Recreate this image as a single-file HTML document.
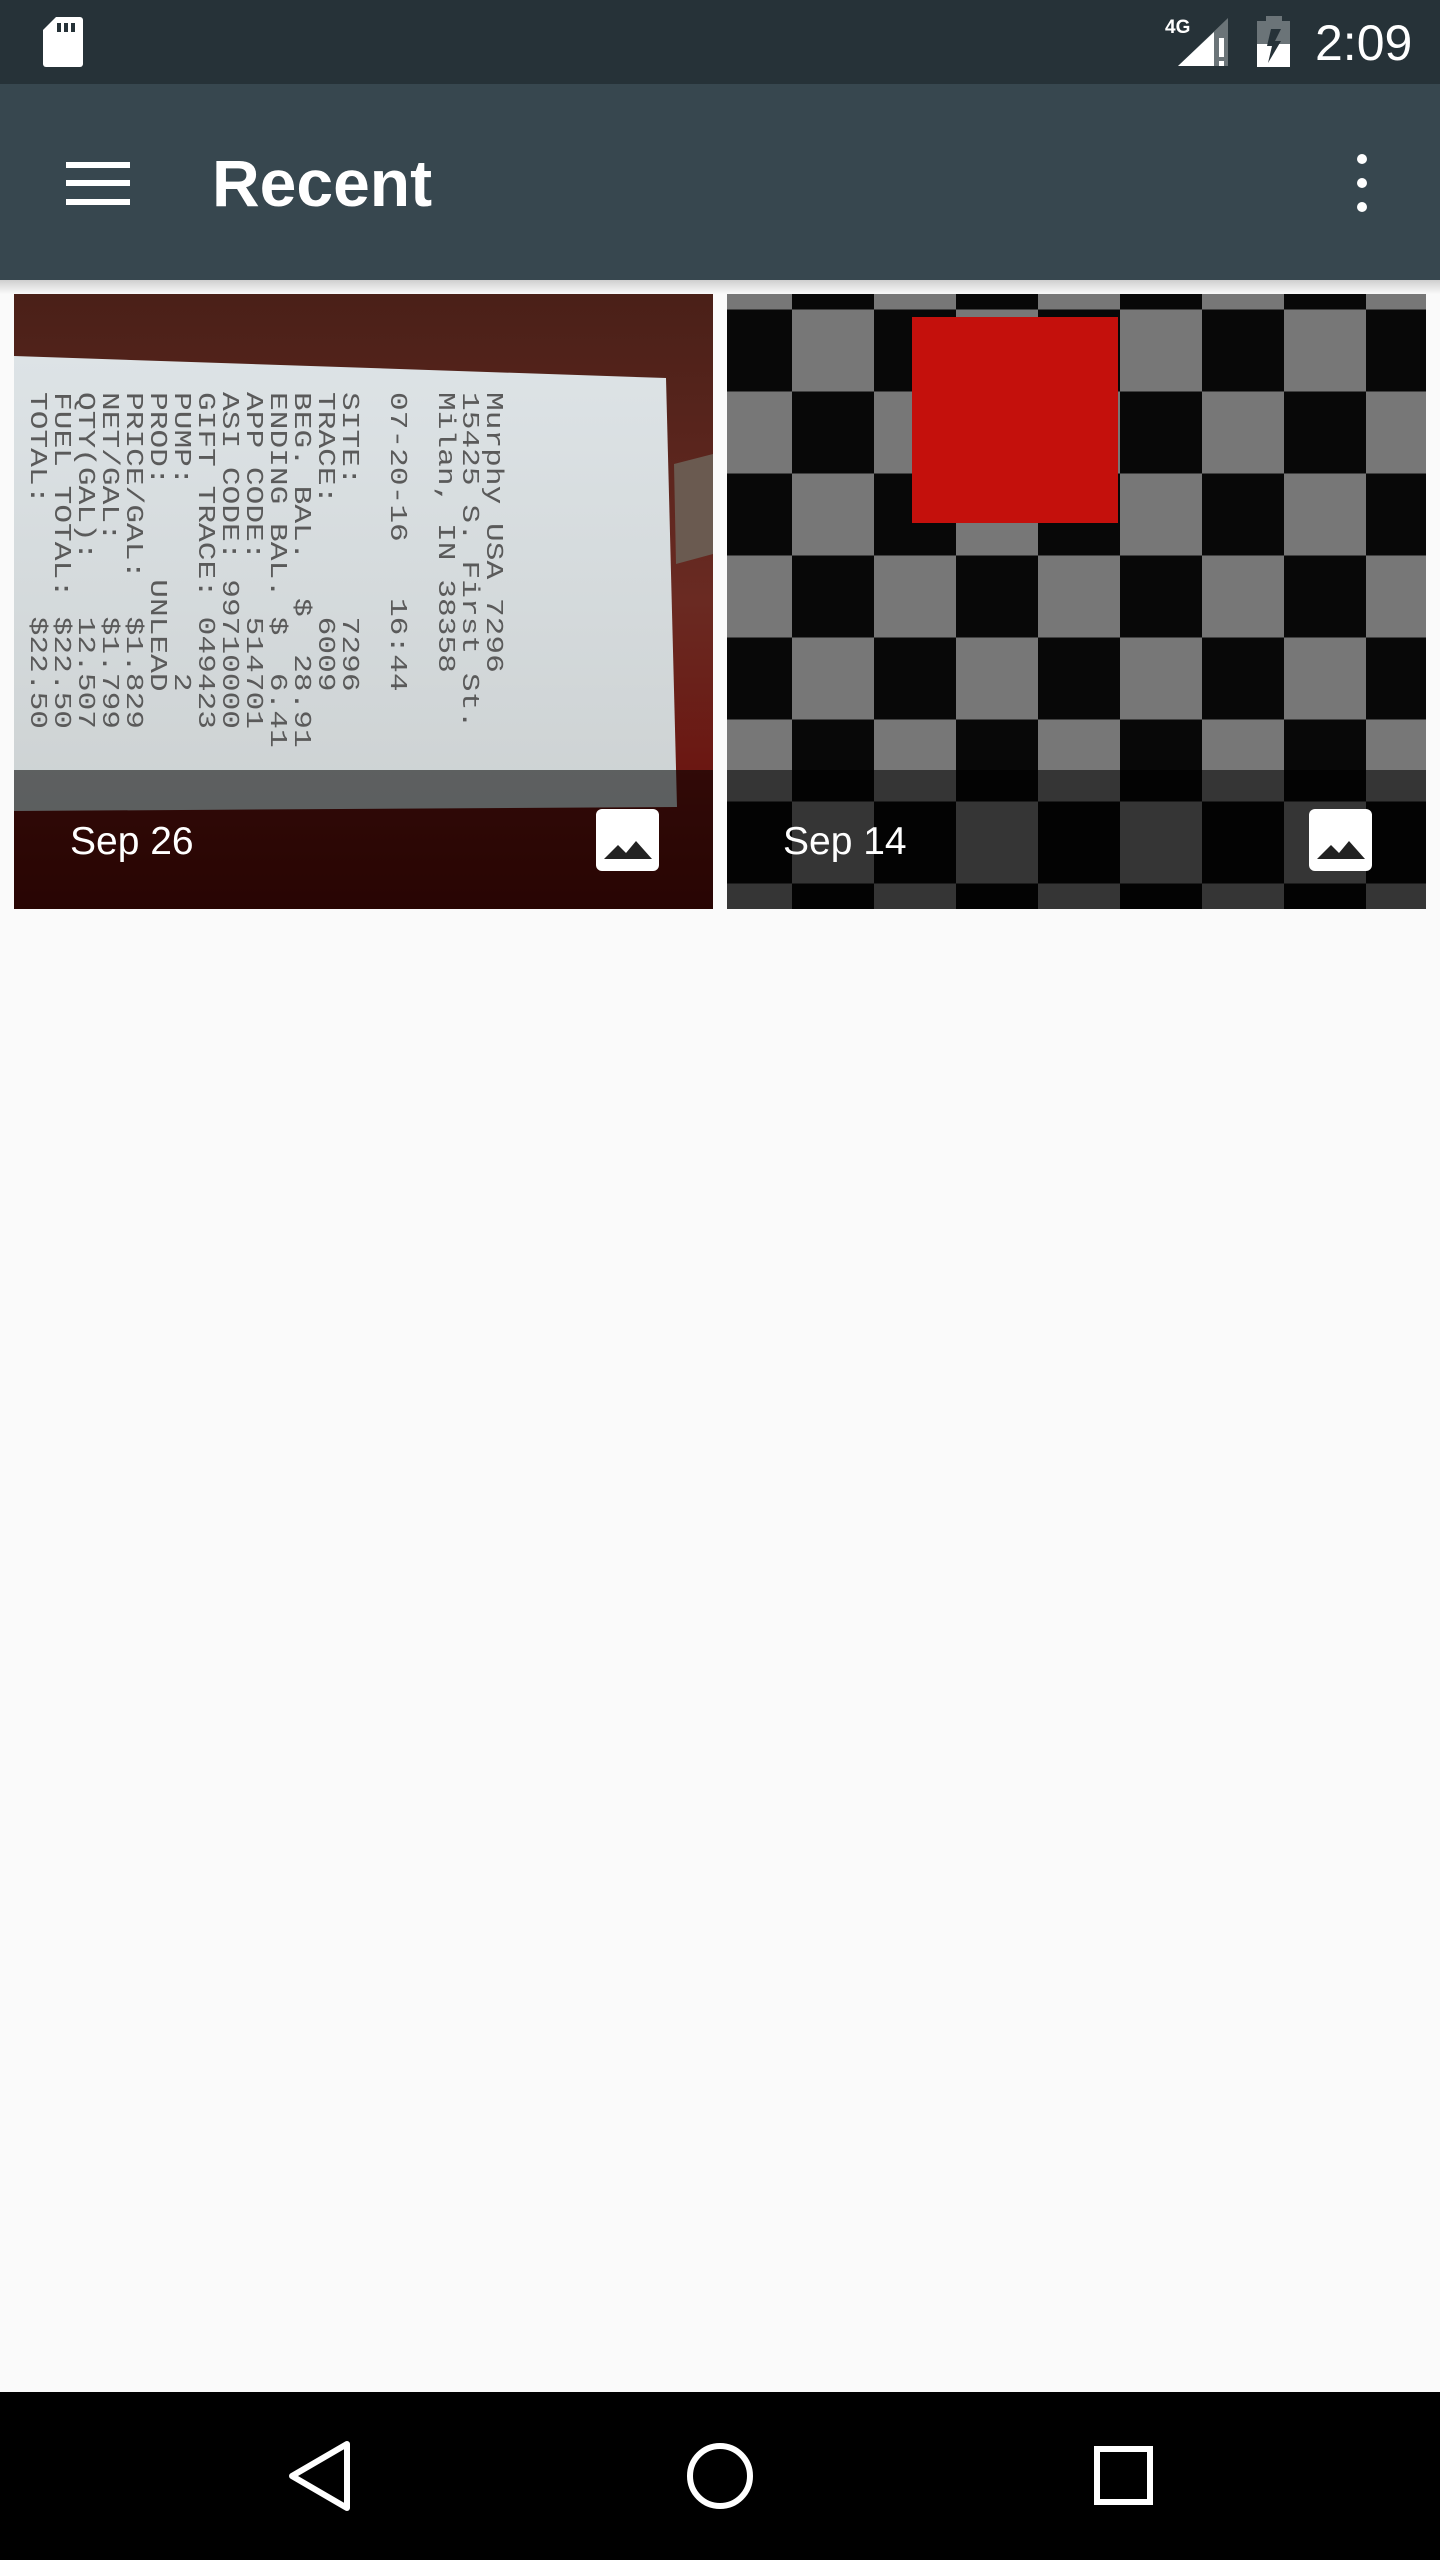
<!DOCTYPE html>
<html><head><meta charset="utf-8"><style>
*{margin:0;padding:0;box-sizing:border-box}
body{width:1440px;height:2560px;background:#fafafa;position:relative;overflow:hidden;font-family:"Liberation Sans",sans-serif}
.abs{position:absolute}
#status{left:0;top:0;width:1440px;height:84px;background:#263238}
#bar{left:0;top:84px;width:1440px;height:196px;background:#37474f}
#shadow{left:0;top:280px;width:1440px;height:14px;background:linear-gradient(#cfcfcf,#fafafa)}
.tile{top:294px;height:615px;overflow:hidden}
#t1{left:14px;width:699px;background:linear-gradient(180deg,#4a2018 0%,#6a2a22 50%,#6b1510 80%,#5a0c08 100%)}
#t2{left:727px;width:699px;background:repeating-conic-gradient(#080808 0 25%,#777 0 50%) -17px -66.5px/164px 164px}
.ov{left:0;top:476px;width:100%;height:139px;background:rgba(0,0,0,0.55)}
.cap{color:#fff;font-size:39px;top:526px;left:56px}
#nav{left:0;top:2392px;width:1440px;height:168px;background:#000}
</style></head><body>
<div id="status" class="abs">
<svg class="abs" style="left:42px;top:17px" width="42" height="51" viewBox="0 0 42 51"><path d="M14 0H38a3 3 0 0 1 3 3V47a3 3 0 0 1-3 3H4a3 3 0 0 1-3-3V13Z" fill="#fff"/><rect x="15" y="6" width="4" height="9" fill="#263238"/><rect x="22" y="6" width="4" height="9" fill="#263238"/><rect x="29" y="6" width="4" height="9" fill="#263238"/></svg>
<div class="abs" style="left:1165px;top:17px;color:#fff;font-weight:bold;font-size:19px">4G</div>
<svg class="abs" style="left:1178px;top:16px" width="60" height="52" viewBox="0 0 60 52"><path d="M0 50L50 2V50Z" fill="#6b7478"/><path d="M0 50L36 16V50Z" fill="#fff"/><rect x="41" y="22" width="5" height="19" fill="#fff"/><rect x="41" y="45" width="5" height="5" fill="#fff"/></svg>
<svg class="abs" style="left:1257px;top:16px" width="34" height="52" viewBox="0 0 34 52"><rect x="9" y="0" width="16" height="6" fill="#6b7478"/><rect x="0" y="5" width="33" height="46" fill="#6b7478"/><rect x="0" y="28" width="33" height="23" fill="#fff"/><path d="M14 13h10l-6 12h6l-13 22 4-17h-5Z" fill="#263238"/></svg>
<div class="abs" style="left:1315px;top:14px;color:#fff;font-size:50px">2:09</div>
</div>
<div id="bar" class="abs">
<div class="abs" style="left:66px;top:78px;width:64px;height:6px;background:#fff"></div>
<div class="abs" style="left:66px;top:96px;width:64px;height:6px;background:#fff"></div>
<div class="abs" style="left:66px;top:115px;width:64px;height:6px;background:#fff"></div>
<div class="abs" style="left:212px;top:61px;color:#fff;font-size:66px;font-weight:bold;line-height:76px">Recent</div>
<div class="abs" style="left:1357px;top:70px;width:10px;height:10px;border-radius:5px;background:#fff"></div>
<div class="abs" style="left:1357px;top:94px;width:10px;height:10px;border-radius:5px;background:#fff"></div>
<div class="abs" style="left:1357px;top:118px;width:10px;height:10px;border-radius:5px;background:#fff"></div>
</div>
<div id="shadow" class="abs"></div>

<div id="t1" class="abs tile">
<svg class="abs" style="left:0;top:0" width="699" height="615"><defs><linearGradient id="pg" x1="0" y1="0" x2="0" y2="1"><stop offset="0" stop-color="#dde3e6"/><stop offset="1" stop-color="#cdd2d3"/></linearGradient></defs><path d="M0 62L652 84L663 513L0 517Z" fill="url(#pg)"/><path d="M660 170L699 160L699 260L662 270Z" fill="#6a5a50"/></svg>
<div class="abs" style="left:-30px;top:98px;width:520px;height:330px;writing-mode:vertical-rl;font-family:'Liberation Mono',monospace;font-size:24px;line-height:24px;color:#5a5a5a;white-space:pre;transform:scaleY(1.3);transform-origin:0 0">Murphy USA 7296
15425 S. First St.
Milan, IN 38358

07-20-16   16:44

SITE:       7296
TRACE:      6009
BEG. BAL.  $  28.91
ENDING BAL. $  6.41
APP CODE:   514701
ASI CODE: 99710000
GIFT TRACE: 049423
PUMP:          2
PROD:     UNLEAD
PRICE/GAL:  $1.829
NET/GAL:    $1.799
QTY(GAL):   12.507
FUEL TOTAL: $22.50
TOTAL:      $22.50</div>
<div class="abs ov"></div>
<div class="abs cap">Sep 26</div>
<svg class="abs" style="left:582px;top:515px" width="63" height="62" viewBox="0 0 63 62"><rect width="63" height="62" rx="6" fill="#fff"/><path d="M8 50L22 36L30 44L40 32L56 50Z" fill="#222"/></svg>
</div>

<div id="t2" class="abs tile">
<div class="abs" style="left:185px;top:23px;width:206px;height:206px;background:#c4100c"></div>
<div class="abs ov"></div>
<div class="abs cap">Sep 14</div>
<svg class="abs" style="left:582px;top:515px" width="63" height="62" viewBox="0 0 63 62"><rect width="63" height="62" rx="6" fill="#fff"/><path d="M8 50L22 36L30 44L40 32L56 50Z" fill="#222"/></svg>
</div>

<div id="nav" class="abs">
<svg class="abs" style="left:0;top:0" width="1440" height="168"><path d="M347 52L347 116L292 84Z" fill="none" stroke="#fff" stroke-width="6" stroke-linejoin="round"/><circle cx="720" cy="84" r="30" fill="none" stroke="#fff" stroke-width="6"/><rect x="1097" y="57" width="53" height="53" fill="none" stroke="#fff" stroke-width="6"/></svg>
</div>
</body></html>
